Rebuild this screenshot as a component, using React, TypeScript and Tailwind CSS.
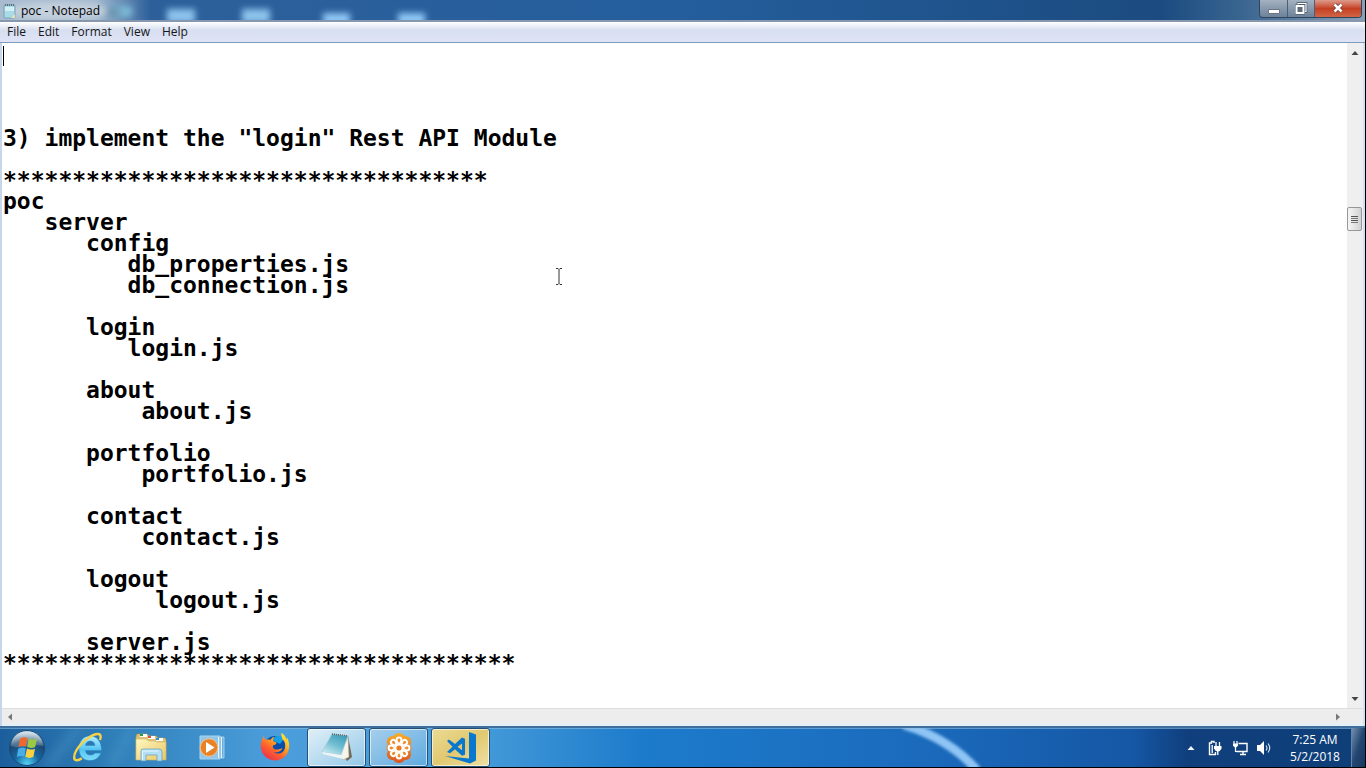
import React from "react";

const documentText = [
  "",
  "",
  "",
  "",
  '3) implement the "login" Rest API Module',
  "",
  "*".repeat(35),
  "poc",
  "   server",
  "      config",
  "         db_properties.js",
  "         db_connection.js",
  "",
  "      login",
  "         login.js",
  "",
  "      about",
  "          about.js",
  "",
  "      portfolio",
  "          portfolio.js",
  "",
  "      contact",
  "          contact.js",
  "",
  "      logout",
  "           logout.js",
  "",
  "      server.js",
  "*".repeat(37),
].join("\n");

function NotepadSmallIcon() {
  return (
    <svg width="14" height="16" viewBox="0 0 14 16" aria-hidden="true">
      <rect x="1" y="2" width="11" height="13" rx="1" fill="#a9dbe6" stroke="#6f97a8" strokeWidth="0.8" />
      <path d="M2 4h9v4H2z" fill="#d5f0f4" />
      <path d="M12 3v12H8l4-4z" fill="#e9e2b8" />
      <path d="M2.5 1v2M4.5 1v2M6.5 1v2M8.5 1v2M10.5 1v2" stroke="#4d5f6b" strokeWidth="0.8" />
    </svg>
  );
}

function TitleBar() {
  return (
    <header className="relative flex h-[22px] shrink-0 items-start justify-between overflow-hidden border-b-2 border-[#8797ae] bg-[#235c9b]">
      <svg className="absolute inset-0 h-full w-full" aria-hidden="true">
        <defs>
          <filter id="glow" x="-50%" y="-100%" width="200%" height="300%">
            <feGaussianBlur stdDeviation="3" />
          </filter>
          <linearGradient id="titleGlass" x1="0" x2="1">
            <stop offset="0" stopColor="#a8bbcf" />
            <stop offset="0.07" stopColor="#a3b9cf" />
            <stop offset="0.11" stopColor="#2d609b" />
            <stop offset="0.5" stopColor="#245e9c" />
            <stop offset="0.85" stopColor="#1b4b80" />
            <stop offset="0.91" stopColor="#396590" />
            <stop offset="1" stopColor="#8aa0b7" />
          </linearGradient>
        </defs>
        <rect width="100%" height="22" fill="url(#titleGlass)" />
        <g filter="url(#glow)">
          <ellipse cx="58" cy="11" rx="52" ry="9" fill="#c4d0dd" />
          <rect x="108" y="6" width="24" height="11" fill="#79b9d6" />
          <rect x="106" y="8" width="14" height="8" fill="#6b93ac" />
          <rect x="167" y="9" width="28" height="14" fill="#8bc2ec" />
          <rect x="242" y="9" width="28" height="14" fill="#8bc2ec" />
          <rect x="323" y="13" width="27" height="12" fill="#8fc7f6" />
          <rect x="398" y="13" width="27" height="12" fill="#8fc7f6" />
        </g>
      </svg>
      <div className="relative flex items-center gap-1 pt-[3px] pl-[3px]">
        <NotepadSmallIcon />
        <h1 className="text-[12px] leading-4 text-black">poc - Notepad</h1>
      </div>
      <div className="relative mr-[3px] flex h-[18px] overflow-hidden rounded-b-[4px] border border-t-0 border-[#30445d]">
        <button type="button" aria-label="Minimize" className="flex w-7 items-center justify-center border-r border-[#4a6077] bg-linear-to-b from-[#a4b2c1] via-[#8799ad] via-50% to-[#6d8299]">
          <svg width="12" height="16" viewBox="0 0 12 16" aria-hidden="true">
            <rect x="0.5" y="8.5" width="11" height="4" rx="0.5" fill="#fff" stroke="#53606e" strokeWidth="0.8" />
          </svg>
        </button>
        <button type="button" aria-label="Restore" className="flex w-[27px] items-center justify-center border-r border-[#4a6077] bg-linear-to-b from-[#a4b2c1] via-[#8799ad] via-50% to-[#6d8299]">
          <svg width="14" height="16" viewBox="0 0 14 16" aria-hidden="true">
            <path d="M4 2.500h8v8H4z" fill="#687789" stroke="#465465" strokeWidth="2.600" />
            <path d="M4 2.500h8v8H4z" fill="none" stroke="#fff" strokeWidth="1.200" />
            <path d="M2.500 5h7v7h-7z" fill="#5d6c7d" stroke="#465465" strokeWidth="3" />
            <path d="M2.500 5h7v7h-7z" fill="#5d6c7d" stroke="#fff" strokeWidth="2" />
          </svg>
        </button>
        <button type="button" aria-label="Close" className="flex w-[46px] items-center justify-center bg-linear-to-b from-[#dc9a8b] via-[#c43f22] via-50% to-[#d06544]">
          <svg width="12" height="14" viewBox="0 0 12 14" aria-hidden="true">
            <path d="M2.500 2.500l7 7M9.500 2.500l-7 7" stroke="#6d3d38" strokeWidth="4" />
            <path d="M2.500 2.500l7 7M9.500 2.500l-7 7" stroke="#fff" strokeWidth="2.500" />
          </svg>
        </button>
      </div>
    </header>
  );
}

function MenuBar() {
  return (
    <nav aria-label="Menu" className="flex h-[21px] shrink-0 items-center gap-3 border-b border-[#7c9dbb] bg-linear-to-b from-white via-[#d7dff0] via-40% to-[#dfe3f5] pl-[7px] text-[12px] leading-4 text-[#161616]">
      {["File", "Edit", "Format", "View", "Help"].map((label) => (
        <button key={label} type="button">
          {label}
        </button>
      ))}
    </nav>
  );
}

function Arrow({ d, color }: { d: string; color: string }) {
  return (
    <svg width="8" height="8" viewBox="0 0 8 8" aria-hidden="true">
      <path d={d} fill={color} />
    </svg>
  );
}

function VerticalScrollbar() {
  return (
    <div className="flex w-4 shrink-0 flex-col items-center bg-[#efeff0]">
      <button type="button" aria-label="Scroll up" className="flex h-5 w-full items-center justify-center">
        <Arrow d="M4 2l3.500 4h-7z" color="#454545" />
      </button>
      <div className="flex w-full flex-1 flex-col items-start">
        <div className="basis-[23%]" />
        <div className="flex h-6 w-[15px] flex-col items-center justify-center gap-px rounded-[2px] border border-[#979797] bg-linear-to-r from-[#f6f6f6] to-[#d2d2d4]">
          <span className="h-px w-[7px] bg-[#555]" />
          <span className="h-px w-[7px] bg-[#777]" />
          <span className="h-px w-[7px] bg-[#555]" />
          <span className="h-px w-[7px] bg-[#777]" />
        </div>
      </div>
      <button type="button" aria-label="Scroll down" className="flex h-[18px] w-full items-center justify-center">
        <Arrow d="M4 6l3.500-4h-7z" color="#454545" />
      </button>
    </div>
  );
}

function Editor() {
  return (
    <main className="flex min-h-0 flex-1 flex-col border-r-2 border-l-2 border-r-[#cfe3f4] border-l-[#c6d7ec] bg-white">
      <div className="flex min-h-0 flex-1">
        <div className="relative flex min-w-0 flex-1">
          <textarea
            aria-label="Document text"
            wrap="off"
            spellCheck={false}
            defaultValue={documentText}
            className="min-w-0 flex-1 resize-none overflow-hidden bg-white pt-px pl-px font-['DejaVu_Sans_Mono','Liberation_Mono',monospace] text-[23px] leading-[21px] font-bold text-black outline-none"
          />
          <span className="absolute top-[3px] left-px h-5 w-px bg-black" />
          <svg className="absolute top-[225px] left-[553px]" width="8" height="17" viewBox="0 0 8 17" aria-hidden="true">
            <path d="M1 .5h2l1 1 1-1h2M4 1.500v14M1 16.500h2l1-1 1 1h2" fill="none" stroke="#333" />
          </svg>
        </div>
        <VerticalScrollbar />
      </div>
      <div className="flex h-4 shrink-0 items-center border-t border-[#dedede] bg-[#ededee]">
        <button type="button" aria-label="Scroll left" className="flex w-4 items-center justify-center">
          <Arrow d="M2 4l4-3.500v7z" color="#777" />
        </button>
        <div className="flex-1" />
        <button type="button" aria-label="Scroll right" className="mr-4 flex w-[18px] items-center justify-center">
          <Arrow d="M6 4l-4-3.500v7z" color="#777" />
        </button>
      </div>
      <div className="h-0.5 shrink-0 bg-[#e4f0f9]" />
    </main>
  );
}

function StartIcon() {
  return (
    <svg width="38" height="38" viewBox="0 0 38 38" aria-hidden="true">
      <defs>
        <radialGradient id="orb" cx="0.5" cy="0.95" r="0.9">
          <stop offset="0" stopColor="#4fd3f5" />
          <stop offset="0.4" stopColor="#18669f" />
          <stop offset="0.75" stopColor="#1c4770" />
          <stop offset="1" stopColor="#a9c0d0" />
        </radialGradient>
        <linearGradient id="orbShine" x1="0" y1="0" x2="0" y2="1">
          <stop offset="0" stopColor="#e5eff5" stopOpacity="0.8" />
          <stop offset="1" stopColor="#a5bdcc" stopOpacity="0.25" />
        </linearGradient>
      </defs>
      <circle cx="19" cy="19" r="17.500" fill="url(#orb)" stroke="#174a77" />
      <path d="M3 17C4 7 11 2.500 19 2.500S34 7 35 17c-9-3-21 4-32 0z" fill="url(#orbShine)" />
      <path d="M12 9.500q4-2.200 7.500-.6L18 17.500q-4-1.500-7.500.8z" fill="#ef682f" />
      <path d="M20.700 9.400q4 2 8.300 0L27.200 18q-4 2-8-.1z" fill="#9bc944" />
      <path d="M10.200 19.800q4-2.100 7.600-.6l-1.500 8.300q-4-1.500-7.500.6z" fill="#49aee8" />
      <path d="M18.900 19.500q4 2 8.100.2l-1.700 8.400q-4 1.700-8-.3z" fill="#fbd142" />
    </svg>
  );
}

function ExplorerBrowserIcon() {
  return (
    <svg width="32" height="32" viewBox="0 0 32 32" aria-hidden="true">
      <defs>
        <linearGradient id="ieBlue" x1="0" y1="0" x2="0" y2="1">
          <stop offset="0" stopColor="#b4edff" />
          <stop offset="0.55" stopColor="#54c5f2" />
          <stop offset="1" stopColor="#81dbfa" />
        </linearGradient>
      </defs>
      <path d="M29.500 18.500H13.500c.2 3 2.200 4.500 5 4.500 2.200 0 3.500-.8 4.300-2h6.200C27.200 25.500 23.500 28.500 18 28.500 11 28.500 7 24 7 16.500S11.400 4 18 4s11.700 5 11.500 14.500zM13.500 13.500h9.400c-.3-2.800-1.900-4.400-4.600-4.400s-4.400 1.600-4.800 4.400z" fill="url(#ieBlue)" stroke="#2689c7" strokeWidth="0.5" fillRule="evenodd" />
      <path d="M28 8c1.500-4 .5-6-2-6C20 2 9 10 4 19c-2.700 5-2.500 9.500 1 9.300 1.700 0 3.500-1 4.800-2" fill="none" stroke="#f5d24a" strokeWidth="2.400" />
    </svg>
  );
}

function FolderIcon() {
  return (
    <svg width="34" height="32" viewBox="0 0 34 32" aria-hidden="true">
      <defs>
        <linearGradient id="folder" x1="0" y1="0" x2="1" y2="1">
          <stop offset="0" stopColor="#fff7c2" />
          <stop offset="1" stopColor="#e7c865" />
        </linearGradient>
      </defs>
      <path d="M2 5l1-3h10l2 2h7l2 2h7l1 2v19H2z" fill="#dfc276" stroke="#b99c51" strokeWidth="0.6" />
      <path d="M6 2h7v3H6z" fill="#fff" />
      <path d="M6 2h3v2H6z" fill="#2a9a4a" />
      <path d="M14 4h7v3h-7z" fill="#fff" />
      <path d="M14 4h3v2h-3z" fill="#d85438" />
      <path d="M22 6h7v3h-7z" fill="#fff" />
      <path d="M22 6h3v2h-3z" fill="#348cd0" />
      <path d="M2 7h10l3 2h6l2 1h9v18H2z" fill="url(#folder)" stroke="#d1b35d" strokeWidth="0.6" />
      <path d="M7 29V19q0-2 2-2h16q3 0 3 3v9h-5v-6H12v6z" fill="#b4def3" stroke="#609fc3" strokeWidth="0.7" />
      <path d="M8.500 28V19h16" fill="none" stroke="#e7f7ff" />
    </svg>
  );
}

function MediaPlayerIcon() {
  return (
    <svg width="28" height="28" viewBox="0 0 28 28" aria-hidden="true">
      <path d="M21 3h5v21h-5z" fill="#6dafdb" stroke="#b7daef" strokeWidth="0.8" />
      <path d="M2 2h20v23H2z" fill="#90c6e9" stroke="#a8d4ed" />
      <path d="M20.500 3v21M23.500 3v21" stroke="#e2f3fc" />
      <circle cx="11" cy="13.500" r="8.800" fill="#e98227" stroke="#f6c28a" />
      <path d="M8 8l8.500 5.500L8 19z" fill="#fff" />
    </svg>
  );
}

function FirefoxIcon() {
  return (
    <svg width="32" height="32" viewBox="0 0 32 32" aria-hidden="true">
      <defs>
        <linearGradient id="fox" x1="0.9" y1="0" x2="0.2" y2="1">
          <stop offset="0" stopColor="#fff13d" />
          <stop offset="0.35" stopColor="#ffaf23" />
          <stop offset="0.65" stopColor="#ff612c" />
          <stop offset="1" stopColor="#e72b55" />
        </linearGradient>
      </defs>
      <circle cx="16" cy="15" r="11" fill="#0b4daa" />
      <path d="M17 4c4-1 8 3 8 3l-4 5-8-4z" fill="#159fe5" />
      <path d="M5 4c0 2 .8 3 2 4 1.500-.6 3-.5 4.500 0 1-2.200 2.500-3 4-3.300-1.500 1.700-1.800 3.200-1 4.500l3 1.300c0 1.700-1.300 2.400-3.500 3-.8 2 1 4.500 4.500 4 2.500-.3 3.500-1.500 5-1-1.400 3-5.300 4.700-8.500 3.500 2.500 2.600 9.500 2.600 11-4.300.9-4-.8-7-2.700-8.400L22 1c3 1 5 4 5.300 6.500l.7-2c3 5 3.200 12.500-.8 17.500-5.700 7.500-17.400 7.100-22.400 0C.3 16.900 1.300 9.300 5 4z" fill="url(#fox)" />
    </svg>
  );
}

function NotepadLargeIcon() {
  return (
    <svg width="34" height="32" viewBox="0 0 34 32" aria-hidden="true">
      <defs>
        <linearGradient id="pad" x1="0.8" y1="0" x2="0.2" y2="1">
          <stop offset="0" stopColor="#3a9bb8" />
          <stop offset="0.5" stopColor="#70bdd2" />
          <stop offset="1" stopColor="#ccecf1" />
        </linearGradient>
      </defs>
      <path d="M28 4l4 21-5 4-3-5z" fill="#746855" />
      <path d="M28 4l1 21-6 3-4-5z" fill="#f5f4ed" stroke="#a5a59a" strokeWidth="0.6" />
      <path d="M12 2l16 2-7 19L2 20z" fill="url(#pad)" stroke="#a9c9d3" strokeWidth="0.7" />
      <path d="M12 2l16 2" stroke="#555f61" strokeWidth="1.500" strokeDasharray="1 1" />
      <path d="M2 20l19 3 2 4-20-5z" fill="#eef7f6" />
    </svg>
  );
}

function FlowerIcon() {
  const petals = [0, 45, 90, 135, 180, 225, 270, 315];
  return (
    <svg width="32" height="32" viewBox="0 0 32 32" aria-hidden="true">
      <defs>
        <linearGradient id="petalBase" gradientUnits="userSpaceOnUse" x1="0" y1="1" x2="0" y2="31">
          <stop offset="0" stopColor="#f6ae29" />
          <stop offset="1" stopColor="#db5525" />
        </linearGradient>
      </defs>
      <path
        d="M16 1c3 0 4.500 1.500 5.500 3 2.500-.2 5 .8 6 3 1.200 2.400.7 4-.2 6 1.500 2.200 1.500 4 0 6.200.9 2 1.300 4-.1 6.200-1.400 2.100-3.500 2.700-5.700 2.600C20.300 30.200 18.500 31 16 31s-4.300-.8-5.500-3c-2.200.1-4.300-.5-5.700-2.600-1.400-2.200-1-4.200-.1-6.200-1.500-2.200-1.500-4 0-6.200-.9-2-1.400-3.600-.2-6 1-2.200 3.500-3.200 6-3C11.500 2.500 13 1 16 1z"
        fill="url(#petalBase)"
      />
      <g fill="#f08a29" stroke="#fff" strokeWidth="2">
        {petals.map((angle) => (
          <path key={angle} d="M16 13c-.6-2-2.400-3.200-2.400-5a2.400 2.400 0 0 1 4.800 0c0 1.800-1.800 3-2.400 5z" transform={`rotate(${angle} 16 16)`} />
        ))}
      </g>
      <circle cx="16" cy="16" r="4" fill="#fff" />
      <circle cx="16" cy="16" r="2.600" fill="#ee7b24" />
    </svg>
  );
}

function CodeIcon() {
  return (
    <svg width="34" height="34" viewBox="0 0 34 34" aria-hidden="true">
      <path d="M25 1l7 2.500v26L26 32.500 1 25l24 2.500z" fill="#0878ce" />
      <path d="M5 8.500l6 4.500 7-6.500 3 1.200v16l-3 1.100-7-6.500-5 4-3-1.300 5.500-5.200L3 10zm13 4l-4.500 3.300 4.500 3.500z" fill="#0878ce" fillRule="evenodd" />
    </svg>
  );
}

function Tray() {
  return (
    <div className="flex h-full shrink-0 items-center">
      <button type="button" aria-label="Show hidden icons" className="flex w-6 justify-center">
        <Arrow d="M4 2l3.500 4h-7z" color="#eef5fb" />
      </button>
      <button type="button" aria-label="Power" className="flex w-6 justify-center">
        <svg width="16" height="18" viewBox="0 0 16 18" aria-hidden="true">
          <path d="M7 4V2.500H4.500V4H2.500v11.500h6V13" fill="none" stroke="#fff" strokeWidth="1.400" />
          <path d="M4.500 6H6v8H4.500z" fill="#dce9f4" />
          <path d="M9 3v4M12.500 3v4M10.800 11v5" stroke="#fff" strokeWidth="1.300" />
          <path d="M7 7h7.500v2.500q-1.200 3-3.700 3T7 9.500z" fill="#fff" />
        </svg>
      </button>
      <button type="button" aria-label="Network" className="flex w-[26px] justify-center">
        <svg width="17" height="18" viewBox="0 0 17 18" aria-hidden="true">
          <path d="M6.500 4.500h8.500v8H4.500M8 15.500h6M11 13v2.500" fill="none" stroke="#fff" strokeWidth="1.400" />
          <path d="M2 2v3M5 2v3M3.500 8v4.500h2" fill="none" stroke="#fff" strokeWidth="1.200" />
          <path d="M1 4.500h5v2.200L3.500 9 1 6.700z" fill="#fff" />
        </svg>
      </button>
      <button type="button" aria-label="Volume" className="flex w-[22px] justify-center">
        <svg width="16" height="16" viewBox="0 0 16 16" aria-hidden="true">
          <path d="M1 5h3l4-4v14l-4-4H1z" fill="#fff" />
          <path d="M10 5.500q2 2.500 0 5M12 3.500q3.500 4.500 0 9" fill="none" stroke="#dce8f3" strokeWidth="1.100" />
        </svg>
      </button>
      <div className="flex w-[76px] flex-col items-center pl-1 text-[12px] leading-[17px] text-white">
        <time>7:25 AM</time>
        <time>5/2/2018</time>
      </div>
      <button type="button" aria-label="Show desktop" className="h-full w-[14px] border-l border-[#6485ac] bg-linear-to-br from-[#738fae] via-[#234772] to-[#16375f]" />
    </div>
  );
}

function Taskbar() {
  const taskClass = "flex h-[39px] w-[59px] items-center justify-center rounded-[3px] border border-[#245079] inset-ring inset-ring-white/60";
  return (
    <footer className="relative flex h-[41px] shrink-0 items-end overflow-hidden border-t-2 border-[#3d6e9c] bg-[#2482ca]">
      <svg className="absolute inset-0 h-full w-full" viewBox="0 0 1365 39" preserveAspectRatio="none" aria-hidden="true">
        <defs>
          <linearGradient id="bar" x1="0" x2="1">
            <stop offset="0" stopColor="#1c5e9c" />
            <stop offset="0.08" stopColor="#2e7eb8" />
            <stop offset="0.2" stopColor="#4b9edb" />
            <stop offset="0.35" stopColor="#459bd9" />
            <stop offset="0.47" stopColor="#1d7bcb" />
            <stop offset="0.67" stopColor="#1b6bbd" />
            <stop offset="0.83" stopColor="#1557a5" />
            <stop offset="0.87" stopColor="#103f7d" />
            <stop offset="1" stopColor="#0e3f78" />
          </linearGradient>
          <filter id="streak">
            <feGaussianBlur stdDeviation="1.800" />
          </filter>
          <filter id="softStreak" x="-30%" width="160%">
            <feGaussianBlur stdDeviation="5" />
          </filter>
        </defs>
        <rect width="1365" height="39" fill="url(#bar)" />
        <path d="M904-3q44 13 73 45" fill="none" stroke="#8ec5f5" strokeWidth="9" filter="url(#streak)" />
        <path d="M40 39L72 0h12L55 39zM105 39l23-39h8l-20 39z" fill="#6eb7df" opacity="0.2" filter="url(#softStreak)" />
        <path d="M0 .5h1365" stroke="#8cbbe0" opacity="0.6" />
      </svg>
      <div className="relative flex h-[39px] flex-1 items-center">
        <button type="button" aria-label="Start" className="flex w-[54px] justify-center"><StartIcon /></button>
        <button type="button" aria-label="Internet Explorer" className="flex w-[68px] justify-center"><ExplorerBrowserIcon /></button>
        <button type="button" aria-label="Windows Explorer" className="flex w-[58px] justify-center"><FolderIcon /></button>
        <button type="button" aria-label="Media Player" className="flex w-[63px] justify-center"><MediaPlayerIcon /></button>
        <button type="button" aria-label="Firefox" className="flex w-[64px] justify-center"><FirefoxIcon /></button>
        <div className="flex gap-[3px]">
          <button type="button" aria-label="Notepad" className={`${taskClass} bg-linear-to-br from-[#e0f0f8] to-[#92c7e7]`}><NotepadLargeIcon /></button>
          <button type="button" aria-label="Meeting" className={`${taskClass} bg-linear-to-br from-[#a5cfec] to-[#5eaadf]`}><FlowerIcon /></button>
          <button type="button" aria-label="Code editor" className={`${taskClass} bg-linear-to-br from-[#eadb92] via-[#e2c870] to-[#eee0a4]`}><CodeIcon /></button>
        </div>
      </div>
      <div className="relative h-[39px]"><Tray /></div>
    </footer>
  );
}

export default function App() {
  return (
    <div className="flex h-screen flex-col overflow-hidden border-r border-b border-black bg-[#c6d7ec] font-['Open_Sans','Noto_Sans',sans-serif]">
      <TitleBar />
      <MenuBar />
      <Editor />
      <Taskbar />
    </div>
  );
}
